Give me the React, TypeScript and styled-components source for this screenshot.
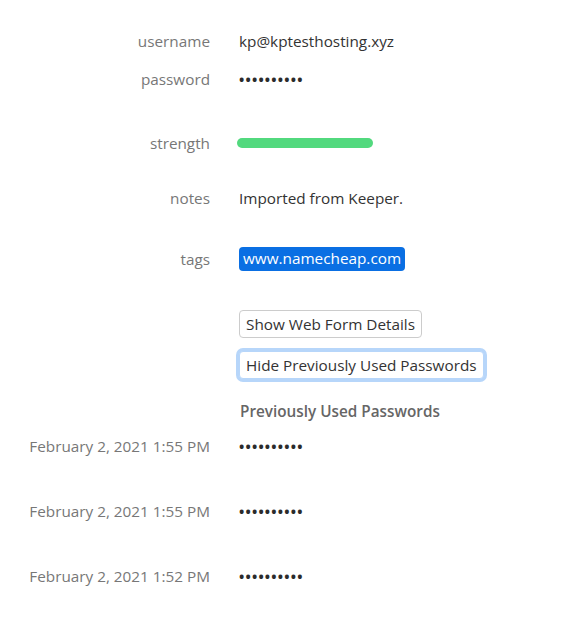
import React from "react";
import styled, { createGlobalStyle } from "styled-components";

const Global = createGlobalStyle`
  html, body { margin: 0; padding: 0; background: #fff; }
  body { font-family: "Open Sans", "Noto Sans", sans-serif; font-size: 15.3px; }
`;

const Page = styled.div`
  padding: 22px 0 0 8px;
  display: flex;
  flex-direction: column;
`;

const Row = styled.div<{ $h?: number; $mt?: number }>`
  display: grid;
  grid-template-columns: 202px 1fr;
  column-gap: 29px;
  align-items: center;
  height: ${(p) => p.$h ?? 38}px;
  margin-top: ${(p) => p.$mt ?? 0}px;
`;

const Label = styled.div`
  text-align: right;
  color: #777;
`;

const Value = styled.div`
  color: #333;
`;

const Dots = styled.span`
  color: #2b2b2b;
  font-size: 14px;
  font-weight: 700;
  letter-spacing: 1.2px;
`;

const Strength = styled.div`
  width: 136px;
  height: 10px;
  border-radius: 5px;
  background: #52d97e;
  margin-left: -2px;
`;

const Tag = styled.span`
  display: inline-block;
  background: #0a6fe3;
  color: #fff;
  border-radius: 4px;
  padding: 1px 4px 2px;
  line-height: 21px;
`;

const Actions = styled.div`
  display: flex;
  flex-direction: column;
  align-items: flex-start;
  gap: 13px;
  margin: 32px 0 0 231px;
`;

const Button = styled.button<{ $focused?: boolean }>`
  font-family: inherit;
  font-size: 15.3px;
  color: #333;
  background: #fff;
  border: 1px solid ${(p) => (p.$focused ? "#b7d6fa" : "#ccc")};
  border-radius: 4px;
  height: 28px;
  padding: 0 6px;
  box-shadow: ${(p) => (p.$focused ? "0 0 0 3px #b7d6fa" : "none")};
`;

const Heading = styled.div`
  margin: 20px 0 0 232px;
  color: #666;
  font-weight: 600;
  height: 24px;
  line-height: 24px;
`;

const History = styled.div`
  display: flex;
  flex-direction: column;
  gap: 27px;
  margin-top: 4px;
`;

const history = [
  "February 2, 2021 1:55 PM",
  "February 2, 2021 1:55 PM",
  "February 2, 2021 1:52 PM",
];

export default function App() {
  return (
    <>
      <Global />
      <Page>
        <Row>
          <Label>username</Label>
          <Value>kp@kptesthosting.xyz</Value>
        </Row>
        <Row>
          <Label>password</Label>
          <Value>
            <Dots>••••••••••</Dots>
          </Value>
        </Row>
        <Row $mt={26}>
          <Label>strength</Label>
          <Value>
            <Strength />
          </Value>
        </Row>
        <Row $mt={17}>
          <Label>notes</Label>
          <Value>Imported from Keeper.</Value>
        </Row>
        <Row $mt={23}>
          <Label>tags</Label>
          <Value>
            <Tag>www.namecheap.com</Tag>
          </Value>
        </Row>
        <Actions>
          <Button>Show Web Form Details</Button>
          <Button $focused>Hide Previously Used Passwords</Button>
        </Actions>
        <Heading>Previously Used Passwords</Heading>
        <History>
          {history.map((d, i) => (
            <Row key={i}>
              <Label>{d}</Label>
              <Value>
                <Dots>••••••••••</Dots>
              </Value>
            </Row>
          ))}
        </History>
      </Page>
    </>
  );
}
